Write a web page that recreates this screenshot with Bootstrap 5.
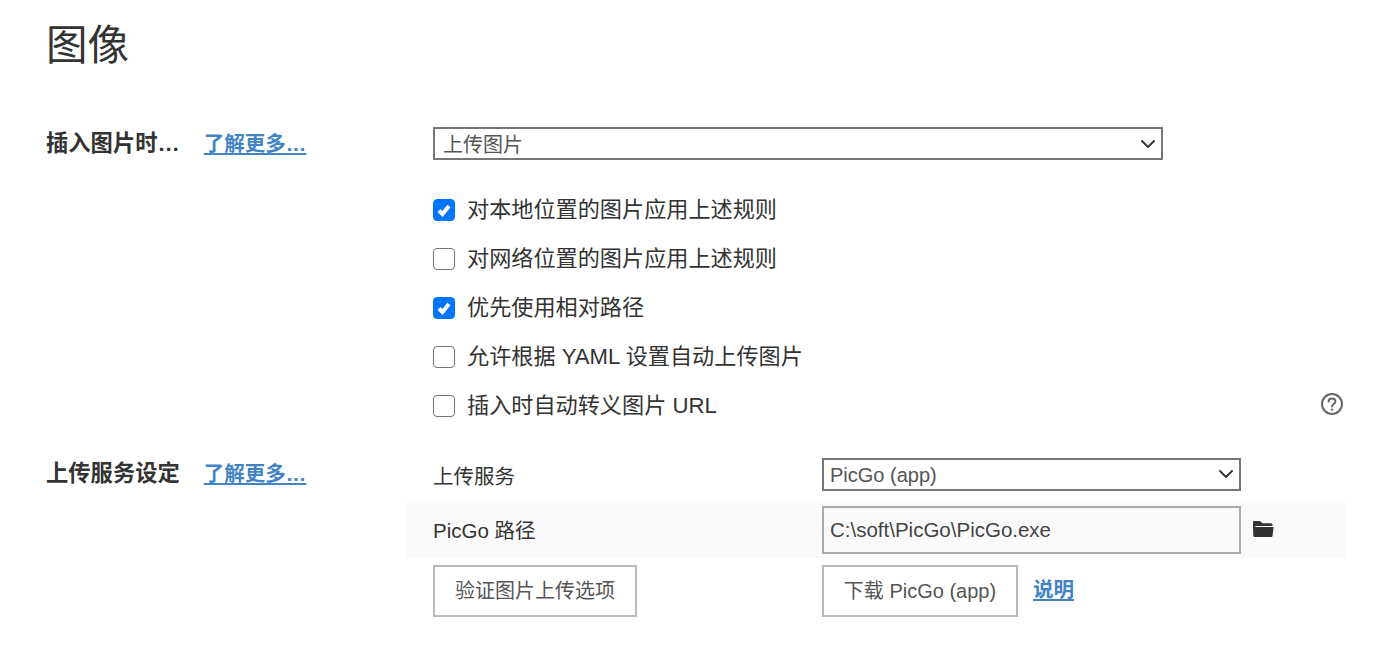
<!DOCTYPE html>
<html lang="zh-CN">
<head>
  <meta charset="UTF-8">
  <meta name="viewport" content="width=device-width, initial-scale=1">
  <title>图像</title>
  <link href="https://cdn.jsdelivr.net/npm/bootstrap@5.3.0/dist/css/bootstrap.min.css" rel="stylesheet">
  <style>
    body {
      font-family: "Liberation Sans", "Noto Sans CJK SC", sans-serif;
      color: #333;
      font-size: 20.5px;
      background: #fff;
    }
    .settings-page {
      padding: 16px 42px 0 46px;
    }
    .page-title {
      font-size: 41.5px;
      font-weight: 400;
      line-height: 60px;
      margin: 0 0 51px;
      color: #333;
    }
    .side-label {
      width: 387px;
      flex: none;
      font-weight: 700;
      display: flex;
      gap: 24px;
      line-height: 33px;
      font-size: 22.3px;
    }
    .side-label a {
      font-size: 20.5px;
    }
    .side-label a, .doc-link {
      color: #4183c4;
      font-weight: 700;
    }
    .main-col {
      flex: 1;
      min-width: 0;
    }
    .image-select.form-select {
      width: 730px;
      height: 33px;
      border: 2px solid #777;
      border-radius: 0;
      font-size: 20px;
      color: #555;
      padding: 3px 30px 0 8px;
      line-height: 26px;
      background-position: right 2px center;
      background-size: 22px 16px;
    }
    .rule-list {
      margin-top: 25px;
      position: relative;
    }
    .rule-item.form-check {
      display: flex;
      align-items: center;
      gap: 12px;
      height: 49px;
      padding: 0;
      margin: 0;
      font-size: 22.15px;
    }
    .rule-item .form-check-input {
      width: 22px;
      height: 22px;
      margin: 0;
      float: none;
      border: 1px solid #767676;
      border-radius: 4px;
    }
    .rule-item .form-check-input:checked {
      border-color: #0075ff;
      background-color: #0075ff;
      background-image: url("data:image/svg+xml,%3csvg xmlns='http://www.w3.org/2000/svg' viewBox='0 0 20 20'%3e%3cpath fill='none' stroke='%23fff' stroke-width='4' d='M5 10.500l3.500 3.500 6.500-8'/%3e%3c/svg%3e");
    }
    .help-icon {
      position: absolute;
      right: 2px;
      bottom: 14px;
      display: block;
    }
    .upload-section {
      margin-top: 26px;
    }
    .upload-section .side-label {
      padding-top: 1px;
    }
    .upload-row {
      display: flex;
      align-items: center;
      margin-left: -27px;
      padding-left: 27px;
    }
    .upload-name {
      width: 389px;
      flex: none;
      padding-top: 2px;
    }
    .service-name {
      padding-top: 6px;
    }
    .service-select.form-select {
      width: 419px;
      height: 33px;
      border: 2px solid #777;
      border-radius: 0;
      font-size: 20px;
      color: #555;
      padding: 0 30px 0 6px;
      background-position: right 2px center;
      background-size: 22px 16px;
    }
    .path-row {
      background: #fafafa;
      height: 55px;
      margin-top: 10px;
    }
    .path-input.form-control {
      width: 419px;
      height: 48px;
      border: 2px solid #aaa;
      border-radius: 0;
      background: #fafafa;
      font-size: 20.5px;
      color: #444;
      padding: 0 6px;
    }
    .folder-icon {
      margin-left: 11px;
      margin-bottom: 2px;
      display: block;
    }
    .action-row {
      margin-top: 7px;
    }
    .plain-btn.btn {
      height: 52px;
      border: 2px solid #bbb;
      border-radius: 0;
      background: #fff;
      color: #555;
      font-size: 20px;
      padding: 0;
      white-space: nowrap;
    }
    .verify-btn {
      width: 204px;
    }
    .download-btn {
      width: 196px;
    }
    .action-cell {
      width: 389px;
      flex: none;
    }
    .doc-link {
      margin-left: 15px;
    }
  </style>
</head>
<body>
  <div class="settings-page">
    <h1 class="page-title">图像</h1>

    <!-- Insert image -->
    <div class="d-flex">
      <div class="side-label">
        <span>插入图片时…</span>
        <a href="#">了解更多…</a>
      </div>
      <div class="main-col">
        <select class="form-select image-select">
          <option>上传图片</option>
        </select>
        <div class="rule-list">
          <div class="form-check rule-item">
            <input class="form-check-input" type="checkbox" id="rule1" checked>
            <label for="rule1">对本地位置的图片应用上述规则</label>
          </div>
          <div class="form-check rule-item">
            <input class="form-check-input" type="checkbox" id="rule2">
            <label for="rule2">对网络位置的图片应用上述规则</label>
          </div>
          <div class="form-check rule-item">
            <input class="form-check-input" type="checkbox" id="rule3" checked>
            <label for="rule3">优先使用相对路径</label>
          </div>
          <div class="form-check rule-item">
            <input class="form-check-input" type="checkbox" id="rule4">
            <label for="rule4">允许根据 YAML 设置自动上传图片</label>
          </div>
          <div class="form-check rule-item">
            <input class="form-check-input" type="checkbox" id="rule5">
            <label for="rule5">插入时自动转义图片 URL</label>
          </div>
          <svg class="help-icon" width="24" height="24" viewBox="0 0 24 24" fill="none" stroke="#666" stroke-width="2">
            <circle cx="12" cy="12" r="10"/>
            <path d="M8.6 9.6c0-2 1.5-3.2 3.4-3.2s3.4 1.200 3.400 3c0 2.600-3.400 2.600-3.400 5.200" stroke-linecap="round"/>
            <circle cx="12" cy="17.6" r="1.2" fill="#666" stroke="none"/>
          </svg>
        </div>
      </div>
    </div>

    <!-- Upload service -->
    <div class="d-flex upload-section">
      <div class="side-label">
        <span>上传服务设定</span>
        <a href="#">了解更多…</a>
      </div>
      <div class="main-col">
        <div class="upload-row">
          <div class="upload-name service-name">上传服务</div>
          <select class="form-select service-select">
            <option>PicGo (app)</option>
          </select>
        </div>
        <div class="upload-row path-row">
          <div class="upload-name">PicGo 路径</div>
          <input class="form-control path-input" type="text" value="C:\soft\PicGo\PicGo.exe">
          <svg class="folder-icon" width="22" height="18" viewBox="0 0 22 18">
            <path fill="#333" d="M2 1h6l2.500 2.200H19a1.500 1.500 0 0 1 1.500 1.500V6H4.200L1 8V2a1 1 0 0 1 1-1zM1 8.500C1.300 7.500 2 7 3 7h17.500c.7 0 1 .4 1 1l-1 8c-.1.700-.6 1-1.200 1H3c-1 0-1.600-.5-1.700-1.300z"/>
          </svg>
        </div>
        <div class="upload-row action-row">
          <div class="action-cell">
            <button type="button" class="btn plain-btn verify-btn">验证图片上传选项</button>
          </div>
          <button type="button" class="btn plain-btn download-btn">下载 PicGo (app)</button>
          <a href="#" class="doc-link">说明</a>
        </div>
      </div>
    </div>
  </div>

  <script src="https://cdn.jsdelivr.net/npm/bootstrap@5.3.0/dist/js/bootstrap.bundle.min.js"></script>
</body>
</html>
